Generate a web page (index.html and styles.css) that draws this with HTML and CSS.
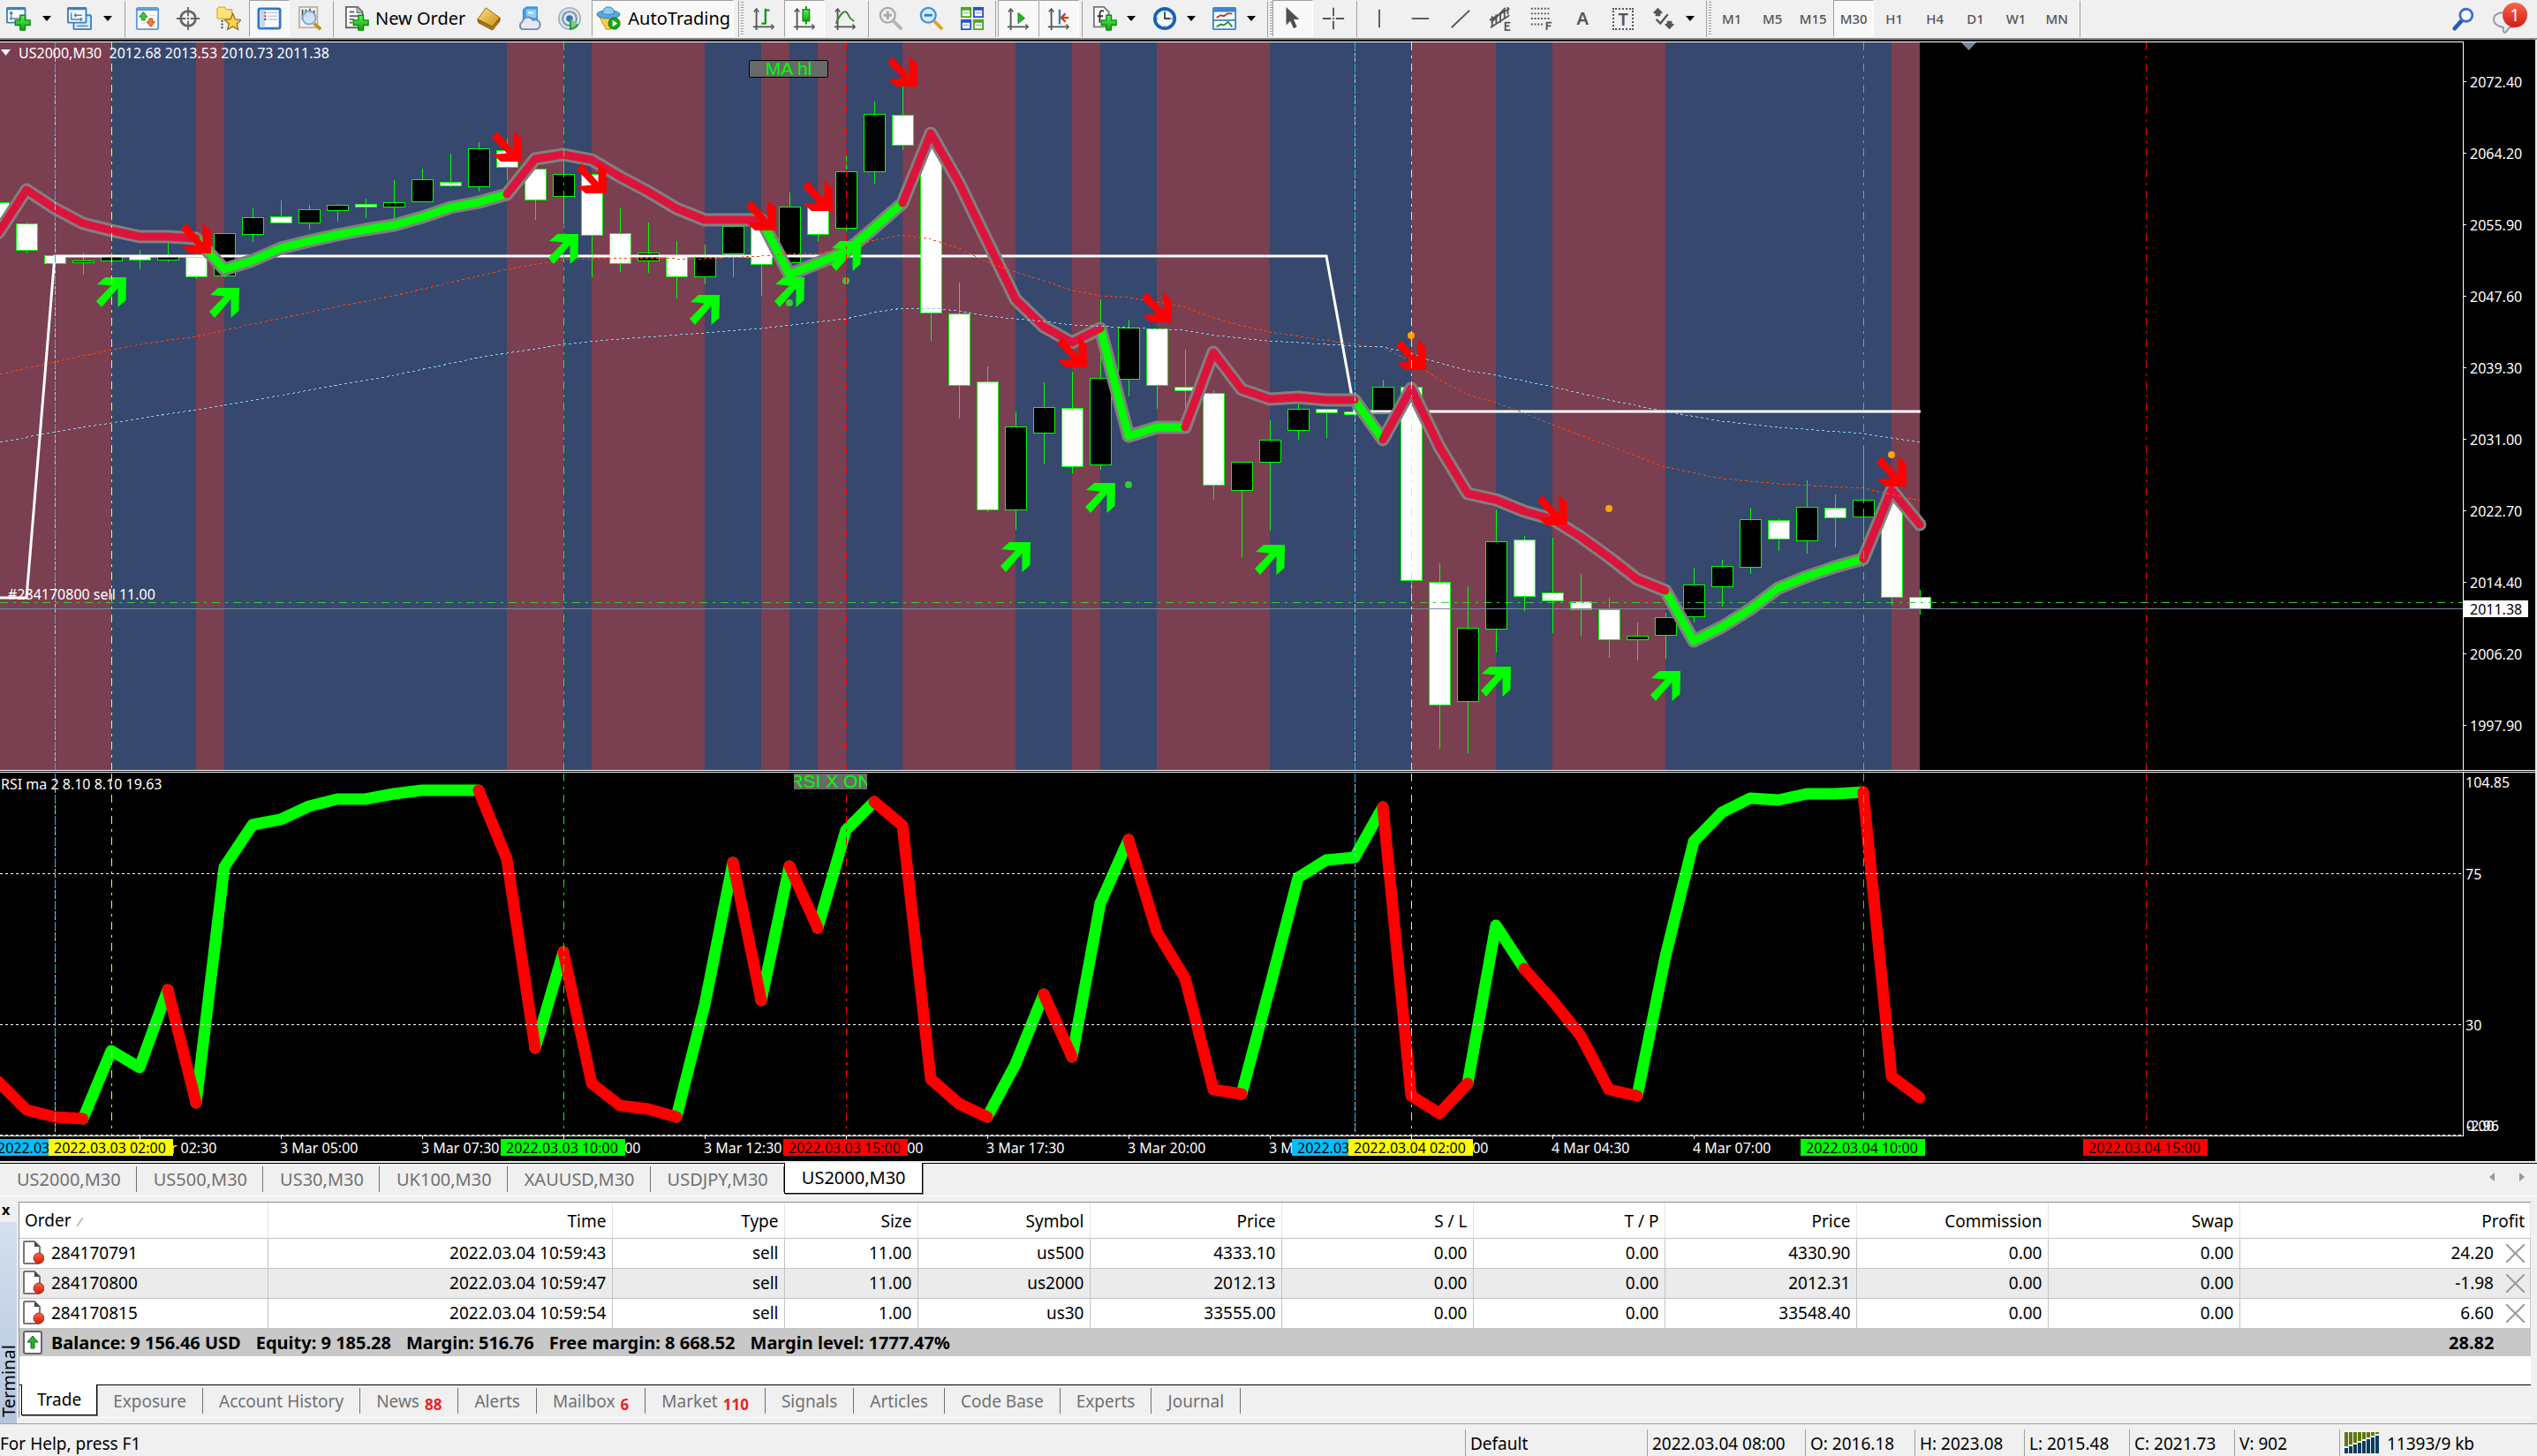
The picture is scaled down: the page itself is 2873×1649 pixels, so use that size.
FILE: index.html
```html
<!DOCTYPE html>
<html lang="en">
<head>
<meta charset="utf-8">
<title>US2000,M30</title>
<link rel="stylesheet" href="styles.css">
</head>
<body>
<svg class="defs" aria-hidden="true">
  <defs>
    <linearGradient id="gGreen" x1="0" y1="0" x2="0" y2="1"><stop offset="0" stop-color="#5df05d"/><stop offset="1" stop-color="#0aa80a"/></linearGradient>
    <linearGradient id="gGold" x1="0" y1="0" x2="1" y2="1"><stop offset="0" stop-color="#ffe08a"/><stop offset="1" stop-color="#c98a10"/></linearGradient>
    <linearGradient id="gRed" x1="0" y1="0" x2="0" y2="1"><stop offset="0" stop-color="#f4664a"/><stop offset="1" stop-color="#d31d10"/></linearGradient>
    <g id="plus"><path d="M17 11h6v6h6v6h-6v6h-6v-6h-6v-6h6z" fill="url(#gGreen)" stroke="#0b8a0b" stroke-width="1.5"/></g>
    <g id="axes" fill="none" stroke="#555" stroke-width="2"><path d="M6 4v25M2 25h25"/><path d="M3 7l3-4 3 4M24 22l3 3-3 3" stroke-width="1.5"/></g>
    <symbol id="docOrder" viewBox="0 0 24 28"><path d="M2 1h11l6 6v17a2 2 0 0 1-2 2H2a1 1 0 0 1-1-1V2z" fill="#fff" stroke="#777" stroke-width="2"/><path d="M13 1v6h6z" fill="#444"/><circle cx="18" cy="20" r="6" fill="url(#gRed)" stroke="#b02a10"/></symbol>
    <symbol id="cross" viewBox="0 0 21 21"><path d="M0 0L21 21M21 0L0 21" stroke="#9a9a9a" stroke-width="2"/></symbol>
  </defs>
</svg>

<header class="toolbar">
  <button class="tool menu" aria-label="New chart"><svg class="icon" viewBox="0 0 30 30"><rect x="1" y="2" width="22" height="18" rx="1" fill="#fff" stroke="#3b7fc0" stroke-width="2"/><path d="M1 3h22" stroke="#3b7fc0" stroke-width="3"/><path d="M6 7v10M4 9l2-2 2 2M4 15h14M16 13l2 2-2 2" fill="none" stroke="#5c7fa5" stroke-width="1.5"/><use href="#plus"/></svg><i class="caret"></i></button>
  <button class="tool menu" aria-label="Profiles"><svg class="icon" viewBox="0 0 30 30"><rect x="8" y="11" width="21" height="17" rx="1" fill="#d8ebfb" stroke="#3b7fc0" stroke-width="2"/><rect x="1" y="2" width="22" height="18" rx="1" fill="#f4faff" stroke="#3b7fc0" stroke-width="2"/><path d="M1 3h22" stroke="#3b7fc0" stroke-width="3"/><path d="M5 8v9M5 16h13M16 14l2 2-2 2M9 11h9M11 9l-2 2 2 2" fill="none" stroke="#5c7fa5" stroke-width="1.5"/><path d="M12 24h13" stroke="#5c7fa5" stroke-width="1.5"/></svg><i class="caret"></i></button>
  <span class="sep"></span>
  <button class="tool" aria-label="Market Watch"><svg class="icon" viewBox="0 0 30 30"><rect x="2" y="2" width="26" height="26" rx="2" fill="#fff" stroke="#5a9bd8" stroke-width="2"/><path d="M2 4h26" stroke="#5a9bd8" stroke-width="3"/><path d="M8 11h5M18 11h7M8 21h5M18 24h7" stroke="#ccc"/><path d="M10 7l5 6h-3v4h-4v-4H5z" fill="#3fc83f" stroke="#17801a"/><path d="M19 25l-5-6h3v-4h4v4h3z" fill="#ff7a3d" stroke="#c03a10"/></svg></button>
  <button class="tool" aria-label="Data Window"><svg class="icon" viewBox="0 0 30 30" fill="none" stroke="#666"><circle cx="15" cy="15" r="9" stroke-width="3"/><path d="M15 1v11M15 18v11M1 15h11M18 15h11" stroke-width="2"/><circle cx="15" cy="15" r="1" fill="#666"/></svg></button>
  <button class="tool" aria-label="Navigator"><svg class="icon" viewBox="0 0 30 30"><path d="M1 3l2-2h7l2 3h7v11H1z" fill="#ffe477" stroke="#c99a1a"/><path d="M7 17v12" stroke="#333" stroke-width="2" stroke-dasharray="2 2"/><path d="M20 9l3 7 7 .6-5.300 4.800L26.500 28.500 20 24.700 13.500 28.500 15.300 21.400 10 16.600l7-.6z" fill="#ffd34d" stroke="#8f6a18" stroke-width="1.300"/></svg></button>
  <button class="tool pressed" aria-label="Terminal"><svg class="icon" viewBox="0 0 30 30"><rect x="2" y="3" width="26" height="24" rx="2" fill="#fff" stroke="#2f78c4" stroke-width="3"/><path d="M7 4v22" stroke="#bcd8f2" stroke-width="5"/><path d="M13 8h12M13 12h12M13 16h12" stroke="#c4c4e4" stroke-width="1.500"/><path d="M9 8h2M9 12h2" stroke="#e02020" stroke-width="2"/><path d="M9 16h2" stroke="#222" stroke-width="2"/></svg></button>
  <button class="tool" aria-label="Strategy Tester"><svg class="icon" viewBox="0 0 30 30"><rect x="2" y="1" width="22" height="25" fill="#f3f1ec" stroke="#b9b4aa" stroke-width="2"/><path d="M6 4v12M10 4v9M15 3v7M20 5v8" stroke="#555" stroke-width="2"/><circle cx="14" cy="14" r="8" fill="#c7e2fa" fill-opacity=".85" stroke="#79a7d6" stroke-width="2"/><path d="M20 21l8 7" stroke="#c78f1c" stroke-width="4"/></svg></button>
  <span class="sep"></span>
  <button class="tool labelled"><svg class="icon" viewBox="0 0 30 30"><path d="M2 1h14l6 6v19H2z" fill="#fff" stroke="#666" stroke-width="2"/><path d="M15 1v7h7" fill="#bbb" stroke="#666"/><path d="M6 7h6M6 12h12M6 16h6M6 20h4" stroke="#666" stroke-width="2"/><use href="#plus"/></svg>New Order</button>
  <button class="tool" aria-label="MetaEditor"><svg class="icon" viewBox="0 0 30 30"><path d="M12 2l17 12-9 12L2 16z" fill="url(#gGold)" stroke="#9a6407"/><path d="M2 16l1 4 17 9 9-11v-4l-9 11z" fill="#b5760c" stroke="#7a4d05"/></svg></button>
  <button class="tool" aria-label="Hosting"><svg class="icon" viewBox="0 0 30 30"><path d="M8 4l4-3h13v16H8z" fill="#3ea4f5" stroke="#1e7fd0"/><path d="M12 4h12v10H12z" fill="#8fd0ff"/><path d="M14 8h6" stroke="#fff" stroke-width="2"/><path d="M7 28a5 5 0 0 1 0-9 7 7 0 0 1 13-2 6 6 0 0 1 5 11z" fill="#e3e9f5" stroke="#7186b3" stroke-width="2"/></svg></button>
  <button class="tool" aria-label="Signals"><svg class="icon" viewBox="0 0 30 30" fill="none"><circle cx="15" cy="15" r="13" fill="#dfe7ea" stroke="#a7b4bb" stroke-width="2"/><circle cx="15" cy="15" r="8.500" stroke="#7c9db5" stroke-width="2.500"/><circle cx="15" cy="15" r="4" fill="#2f6fc4"/><path d="M16 15v13q6-1 9-6" fill="#7fc98a" stroke="#1e9c2c" stroke-width="2"/></svg></button>
  <button class="tool labelled pressed auto"><svg class="icon" viewBox="0 0 30 30"><path d="M4 13h22l-8 15h-6z" fill="#f7cf4a" stroke="#c18f12"/><ellipse cx="15" cy="10" rx="14" ry="5" fill="#5aa9dc" stroke="#2b7db5"/><path d="M8 9q0-8 7-8t7 8q-7 3-14 0z" fill="#8ccbf0" stroke="#2b7db5"/><circle cx="22" cy="21" r="7" fill="#18a818" stroke="#0c700c"/><path d="M20 17l6 4-6 4z" fill="#fff"/></svg>AutoTrading</button>
  <span class="sep"></span><span class="grip"></span>
  <button class="tool" aria-label="Bar chart"><svg class="icon" viewBox="0 0 30 30"><use href="#axes"/><path d="M17 3v19M12 21h5M17 5h5" stroke="#159a15" stroke-width="2.500" fill="none"/></svg></button>
  <button class="tool pressed" aria-label="Candlesticks"><svg class="icon" viewBox="0 0 30 30"><use href="#axes"/><path d="M17 0v22" stroke="#118811" stroke-width="2"/><rect x="13" y="4" width="8" height="14" fill="url(#gGreen)" stroke="#118811" stroke-width="1.500"/></svg></button>
  <button class="tool" aria-label="Line chart"><svg class="icon" viewBox="0 0 30 30"><use href="#axes"/><path d="M4 21C9 9 15 3 18 9s4 7 8 9" stroke="#2c8a2c" stroke-width="2" fill="none"/></svg></button>
  <span class="sep"></span>
  <button class="tool" aria-label="Zoom in" disabled><svg class="icon" viewBox="0 0 30 30"><circle cx="11" cy="11" r="9" fill="#eee" stroke="#aaa" stroke-width="2.500"/><path d="M11 6v10M6 11h10" stroke="#aaa" stroke-width="3"/><path d="M18 18l10 10" stroke="#b5b5b5" stroke-width="4"/></svg></button>
  <button class="tool" aria-label="Zoom out"><svg class="icon" viewBox="0 0 30 30"><circle cx="11" cy="11" r="9" fill="#d4ecfd" stroke="#4a93cf" stroke-width="2.500"/><path d="M6 11h10" stroke="#2f7fc0" stroke-width="3"/><path d="M18 18l10 10" stroke="#d9a51f" stroke-width="4"/></svg></button>
  <button class="tool" aria-label="Tile windows"><svg class="icon" viewBox="0 0 30 30"><path d="M1 1h13v13H1z" fill="#49a81e"/><path d="M16 1h13v13H16z" fill="#2a52c8"/><path d="M1 16h13v13H1z" fill="#2a52c8"/><path d="M16 16h13v13H16z" fill="#49a81e"/><path d="M3 5h9v7H3zM18 5h9v7h-9zM3 20h9v7H3zM18 20h9v7h-9z" fill="#fff"/><path d="M4 8h7M19 8h7M4 23h7M19 23h7" stroke="#9db4d8" stroke-width="1.500"/></svg></button>
  <span class="sep"></span>
  <button class="tool pressed" aria-label="Auto scroll"><svg class="icon" viewBox="0 0 30 30"><use href="#axes"/><path d="M15 8v13l8-6.500z" fill="#1fb81f" stroke="#118811"/></svg></button>
  <button class="tool pressed" aria-label="Chart shift"><svg class="icon" viewBox="0 0 30 30"><use href="#axes"/><path d="M16 4v18" stroke="#2f7fc0" stroke-width="2.500"/><path d="M27 14h-7M23 9l-5 5 5 5" stroke="#c8401a" stroke-width="2.500" fill="none"/></svg></button>
  <span class="sep"></span>
  <button class="tool menu pick" aria-label="Indicators"><svg class="icon" viewBox="0 0 30 30"><path d="M2 1h12l6 6v18H2z" fill="#fff" stroke="#777" stroke-width="2"/><path d="M14 6q-5-2-5 4v10M6 12h7" stroke="#333" stroke-width="2" fill="none"/><use href="#plus"/></svg><i class="caret"></i></button>
  <button class="tool menu pick" aria-label="Periods"><svg class="icon" viewBox="0 0 30 30"><circle cx="15" cy="15" r="12" fill="#f5f9fd" stroke="#1663b8" stroke-width="4"/><path d="M15 7v8h7" stroke="#345" stroke-width="2" fill="none"/><g fill="#89a"><circle cx="15" cy="6" r="1"/><circle cx="6" cy="15" r="1"/><circle cx="15" cy="24" r="1"/><circle cx="24" cy="15" r="1"/></g></svg><i class="caret"></i></button>
  <button class="tool menu pick" aria-label="Templates"><svg class="icon" viewBox="0 0 30 30"><rect x="1" y="2" width="27" height="26" rx="1" fill="#fff" stroke="#3d86cc" stroke-width="2"/><path d="M1 4.500h27" stroke="#3d86cc" stroke-width="5"/><path d="M1 17h27" stroke="#3d86cc" stroke-width="2"/><path d="M5 14l5-3 4 1 4-3 6 0" stroke="#a63c1c" stroke-width="2" fill="none"/><path d="M5 25l5-3 4 1 5-4 5 6" stroke="#2c8a2c" stroke-width="2" fill="none"/></svg><i class="caret"></i></button>
  <span class="sep"></span><span class="grip"></span>
  <button class="tool pressed" aria-label="Cursor"><svg class="icon" viewBox="0 0 30 30"><path d="M7 1v22l5-5 4 9 4-2-4-9h7z" fill="#4f4f4f"/></svg></button>
  <button class="tool" aria-label="Crosshair"><svg class="icon" viewBox="0 0 30 30"><path d="M15 2v10M15 18v10M2 15h10M18 15h10M15 14v2" stroke="#555" stroke-width="2"/></svg></button>
  <span class="sep"></span>
  <button class="tool" aria-label="Vertical line"><svg class="icon" viewBox="0 0 30 30"><path d="M15 4v22" stroke="#555" stroke-width="2"/></svg></button>
  <button class="tool" aria-label="Horizontal line"><svg class="icon" viewBox="0 0 30 30"><path d="M5 15h21" stroke="#555" stroke-width="2"/></svg></button>
  <button class="tool" aria-label="Trendline"><svg class="icon" viewBox="0 0 30 30"><path d="M4 26L26 5" stroke="#555" stroke-width="2"/></svg></button>
  <button class="tool" aria-label="Equidistant channel"><svg class="icon" viewBox="0 0 30 30"><path d="M1 17L25 3M2 26L25 11M4 12v13M9 10v11M14 8v12M19 4v10M23 1v9M3 20L20 2" stroke="#555" stroke-width="2"/><path d="M26 20h-6v9h6M20 24h5" stroke="#555" stroke-width="2" fill="none"/></svg></button>
  <button class="tool" aria-label="Fibonacci retracement"><svg class="icon" viewBox="0 0 30 30"><path d="M2 3h24M2 9h24M2 15h24M2 22h15" stroke="#555" stroke-width="2" stroke-dasharray="2 2"/><path d="M27 20h-6v9M21 24h5" stroke="#555" stroke-width="2" fill="none"/></svg></button>
  <button class="tool glyph">A</button>
  <button class="tool glyph"><span class="dotted">T</span></button>
  <button class="tool menu pick" aria-label="Arrows"><svg class="icon" viewBox="0 0 30 30"><path d="M8 2l6 6-3 1v3H5V9L2 8zM22 28l-6-6 3-1v-3h6v3l3 1z" fill="#555"/><path d="M6 16l5 5 9-11" stroke="#555" stroke-width="2.500" fill="none"/></svg><i class="caret"></i></button>
  <span class="sep"></span><span class="grip"></span>
  <button class="tool period">M1</button>
  <button class="tool period">M5</button>
  <button class="tool period">M15</button>
  <button class="tool period pressed">M30</button>
  <button class="tool period">H1</button>
  <button class="tool period">H4</button>
  <button class="tool period">D1</button>
  <button class="tool period">W1</button>
  <button class="tool period">MN</button>
  <span class="sep"></span>
  <span class="spacer"></span>
  <button class="tool" aria-label="Search"><svg class="icon" viewBox="0 0 30 30"><path d="M4 27l10-11" stroke="#2b57b8" stroke-width="5" stroke-linecap="round"/><circle cx="18" cy="11" r="7.500" fill="#f3f7ff" stroke="#3f6fc9" stroke-width="3"/></svg></button>
  <button class="tool notify" aria-label="1 notification"><svg class="bubble" viewBox="0 0 40 40"><path d="M14 36q-3 0-2-6Q1 28 1 21q0-8 14-8t14 8q0 9-10 9z" fill="#eceef4" stroke="#9a9aa4" stroke-width="2"/><circle cx="25" cy="16" r="14" fill="url(#gRed)"/></svg><span class="count">1</span></button>
</header>

<main class="chart">
  <svg id="plot" class="plot" role="img" aria-label="US2000 M30 price chart with RSI"></svg>
  <button class="chart-button ma">MA hl</button>
  <button class="chart-button rsi">RSI X ON</button>
</main>

<nav class="chart-tabs">
  <button>US2000,M30</button><button>US500,M30</button><button>US30,M30</button><button>UK100,M30</button><button>XAUUSD,M30</button><button>USDJPY,M30</button><button class="active">US2000,M30</button>
  <span class="spacer"></span>
  <button class="scroll" aria-label="Scroll left"><i class="left"></i></button>
  <button class="scroll" aria-label="Scroll right"><i class="right"></i></button>
</nav>

<section class="terminal">
  <aside class="side"><button class="close" aria-label="Close terminal">x</button><div class="side-title">Terminal</div></aside>
  <div class="terminal-body">
    <table>
      <colgroup><col class="c-order"><col class="c-time"><col class="c-type"><col class="c-size"><col class="c-symbol"><col class="c-num"><col class="c-num"><col class="c-num"><col class="c-num"><col class="c-num"><col class="c-num"><col></colgroup>
      <thead><tr><th>Order <span class="sort">⁄</span></th><th>Time</th><th>Type</th><th>Size</th><th>Symbol</th><th>Price</th><th>S / L</th><th>T / P</th><th>Price</th><th>Commission</th><th>Swap</th><th>Profit</th></tr></thead>
      <tbody>
        <tr><td><span class="order"><svg class="doc"><use href="#docOrder"/></svg>284170791</span></td><td>2022.03.04 10:59:43</td><td>sell</td><td>11.00</td><td>us500</td><td>4333.10</td><td>0.00</td><td>0.00</td><td>4330.90</td><td>0.00</td><td>0.00</td><td><span class="profit">24.20<button aria-label="Close order 284170791"><svg><use href="#cross"/></svg></button></span></td></tr>
        <tr class="alt"><td><span class="order"><svg class="doc"><use href="#docOrder"/></svg>284170800</span></td><td>2022.03.04 10:59:47</td><td>sell</td><td>11.00</td><td>us2000</td><td>2012.13</td><td>0.00</td><td>0.00</td><td>2012.31</td><td>0.00</td><td>0.00</td><td><span class="profit">-1.98<button aria-label="Close order 284170800"><svg><use href="#cross"/></svg></button></span></td></tr>
        <tr><td><span class="order"><svg class="doc"><use href="#docOrder"/></svg>284170815</span></td><td>2022.03.04 10:59:54</td><td>sell</td><td>1.00</td><td>us30</td><td>33555.00</td><td>0.00</td><td>0.00</td><td>33548.40</td><td>0.00</td><td>0.00</td><td><span class="profit">6.60<button aria-label="Close order 284170815"><svg><use href="#cross"/></svg></button></span></td></tr>
      </tbody>
      <tfoot><tr><td colspan="11"><div class="order"><svg class="doc" viewBox="0 0 24 28"><rect x="1" y="1" width="20" height="25" rx="2" fill="#fff" stroke="#666" stroke-width="2"/><path d="M11 6l6 7h-4v7H9v-7H5z" fill="#2fae2f" stroke="#0d6f0d"/></svg><div class="figures"><span>Balance: 9 156.46 USD</span><span>Equity: 9 185.28</span><span>Margin: 516.76</span><span>Free margin: 8 668.52</span><span>Margin level: 1777.47%</span></div></div></td><td class="total">28.82</td></tr></tfoot>
    </table>
    <nav class="terminal-tabs">
      <button class="active">Trade</button><button>Exposure</button><button>Account History</button><button>News<b>88</b></button><button>Alerts</button><button>Mailbox<b>6</b></button><button>Market<b>110</b></button><button>Signals</button><button>Articles</button><button>Code Base</button><button>Experts</button><button>Journal</button>
    </nav>
  </div>
</section>

<footer class="status">
  <span class="help">For Help, press F1</span>
  <span class="profile">Default</span>
  <span class="when">2022.03.04 08:00</span>
  <span class="wide">O: 2016.18</span><span class="wide">H: 2023.08</span><span>L: 2015.48</span><span>C: 2021.73</span><span>V: 902</span>
  <span class="net"><svg id="bars" width="40" height="24"></svg>11393/9 kb</span>
</footer>
<script src="chart.js"></script>
</body>
</html>
```
FILE: styles.css
```css
* { box-sizing: border-box; }
body { margin: 0; min-height: 100vh; display: flex; flex-direction: column; background: #f0f0f0; color: #000; font: 19px/26px "Noto Sans", "Open Sans", sans-serif; overflow-x: hidden; }
button { font: inherit; color: inherit; background: none; border: 0; padding: 0; margin: 0; }
.defs { position: absolute; width: 0; height: 0; }
.spacer { flex: 1; }

.toolbar { display: flex; align-items: flex-start; height: 45px; border-bottom: 2px solid #8c8c8c; white-space: nowrap; }
.tool { flex: none; width: 46px; height: 42px; display: flex; align-items: center; justify-content: center; }
.tool.pressed { border-left: 1px solid #a0a0a0; border-top: 1px solid #a0a0a0; background: #f8f8f8; border-right: 1px solid #fff; border-bottom: 1px solid #fff; }
.icon { width: 28px; height: 28px; flex: none; }
.menu { width: 69px; justify-content: flex-start; gap: 13px; padding-left: 7px; }
.menu.pick { width: 68px; padding-left: 9px; gap: 11px; }
.caret { border: 5px solid transparent; border-top: 6px solid #000; border-bottom: 0; }
.labelled { width: auto; gap: 7px; padding: 0 3px 0 10px; font-size: 20px; }
.labelled.auto { gap: 8px; padding: 0 3px 0 4px; margin: 0 2px; }
.sep { width: 1px; height: 41px; margin: 1px 2px 0 3px; background: #a0a0a0; flex: none; }
.grip { width: 3px; height: 38px; margin-top: 2px; background: repeating-linear-gradient(#999 0 1px, #f0f0f0 1px 3px); flex: none; }
.glyph { color: #555; font: 600 20px/24px "Noto Sans", sans-serif; }
.dotted { width: 24px; height: 25px; border: 2px dotted #555; display: block; line-height: 21px; }
.period { color: #555; font: 500 15px/20px "Noto Sans", sans-serif; }
.notify { position: relative; width: 44px; margin: 0 8px 0 8px; }
.bubble { width: 40px; height: 40px; }
.count { position: absolute; left: 18px; top: 4px; width: 18px; text-align: center; color: #fff; font-size: 20px; line-height: 26px; }

.chart { position: relative; height: 1270px; flex: none; background: #000; border-right: 2px solid #e8e8e8; overflow: hidden; }
.plot { display: block; width: 100%; height: 100%; font: 16px "Noto Sans", sans-serif; fill: #fff; }
.chart-button { position: absolute; display: flex; align-items: center; justify-content: center; overflow: hidden; white-space: nowrap; background: #696969; color: #0f0; font: 21px/20px "Liberation Sans", Arial, sans-serif; }
.ma { left: 848px; top: 23px; width: 90px; height: 20px; border: 1px solid #000; border-radius: 2px; }
.rsi { left: 899px; top: 831px; width: 83px; height: 18px; }

.chart-tabs { display: flex; height: 38px; margin-top: 2px; border-top: 1px solid #000; border-bottom: 1px solid #fff; color: #707070; font-size: 20px; }
.chart-tabs button { padding: 0 18px 0 19px; position: relative; }
.chart-tabs button::after { content: ""; position: absolute; right: 0; top: 3px; height: 29px; border-right: 1px solid #707070; }
.chart-tabs .active { background: #fff; color: #000; border: 1px solid #000; border-top: 0; box-shadow: 1px 1px 0 #888; margin-top: -1px; height: 35px; }
.chart-tabs .active::after, .chart-tabs .scroll::after { content: none; }
.chart-tabs .scroll { padding: 0 14px; height: 30px; }
.left, .right { display: block; border: 5px solid transparent; }
.left { border-right: 6px solid #999; border-left: 0; }
.right { border-left: 6px solid #999; border-right: 0; }

.terminal { display: flex; flex: 1; margin-top: 6px; }
.side { width: 21px; display: flex; flex-direction: column; padding-right: 2px; }
.close { height: 23px; width: 13px; font: bold 16px/14px "Noto Sans", sans-serif; padding-bottom: 6px; }
.side-title { flex: 1; background: linear-gradient(#b6c5dc, #d3e0ef); writing-mode: vertical-rl; transform: rotate(180deg); font-size: 20px; line-height: 19px; padding-top: 7px; }
.terminal-body { flex: 1; display: flex; flex-direction: column; border-left: 1px solid #909090; border-top: 1px solid #909090; border-bottom: 1px solid #fff; margin-right: 7px; min-width: 0; height: 245px; }
table { width: 100%; table-layout: fixed; border-collapse: collapse; background: #fff; }
.c-order { width: 281px; } .c-time { width: 390px; } .c-type { width: 195px; } .c-size { width: 151px; } .c-symbol { width: 195px; } .c-num { width: 217px; }
th, td { padding: 0 6px; text-align: right; font-weight: normal; white-space: nowrap; height: 34px; border: 1px solid #c4c4c4; border-width: 0 1px 1px 0; }
th { height: 40px; padding-top: 2px; border-right-color: #e4e4e4; }
th:first-child, td:first-child { text-align: left; }
td:first-child { padding-left: 4px; }
.sort { color: #888; font-size: 14px; margin-left: 4px; }
.alt { background: #ebebeb; }
.order { display: flex; align-items: center; gap: 8px; }
.figures { display: flex; gap: 17px; }
.doc { width: 24px; height: 28px; }
.profit { display: flex; align-items: center; justify-content: flex-end; gap: 14px; }
.profit button, .profit svg { display: block; width: 21px; height: 21px; }
tfoot td { background: #c8c8c8; border: 0; font-weight: bold; font-size: 20px; }
tfoot .total { padding-right: 41px; }
.terminal-tabs { display: flex; height: 37px; margin-top: auto; border-top: 1px solid #000; color: #707070; background: #f0f0f0; box-shadow: 0 -32px 0 #fff; padding-left: 2px; }
.terminal-tabs button { position: relative; padding: 0 19px 0 18px; display: flex; gap: 6px; align-items: center; }
.terminal-tabs button::after { content: ""; position: absolute; right: 0; top: 3px; height: 29px; border-right: 1px solid #707070; }
.terminal-tabs .active { padding: 0 17px; background: #fff; color: #000; border: 1px solid #000; border-top: 0; height: 35px; margin-top: -1px; box-shadow: 1px 1px 0 #888; }
.terminal-tabs .active::after { content: none; }
.terminal-tabs b { color: #f02020; font-size: 17px; padding-top: 8px; }

.status { display: flex; height: 37px; border-top: 1px solid #a0a0a0; align-items: flex-end; }
.status span { width: 119px; height: 30px; border-left: 1px solid #a0a0a0; padding: 4px 0 0 5px; line-height: 24px; white-space: nowrap; }
.status .help { flex: 1; border: 0; padding-left: 0; }
.status .wide { width: 124px; }
.status .profile { width: 206px; } .status .when { width: 179px; }
.status .net { width: 224px; display: flex; gap: 8px; padding-top: 3px; line-height: 26px; }
```
FILE: chart.js
```js
const NS = 'http://www.w3.org/2000/svg';
const plot = document.getElementById('plot');
const TOP = 45;
const FIRST = 30, STEP = 32;
const xOf = k => FIRST + STEP * k;

function add(parent, tag, attrs, text) {
  const el = document.createElementNS(NS, tag);
  for (const name in attrs) el.setAttribute(name, attrs[name]);
  if (text !== undefined) el.textContent = text;
  parent.appendChild(el);
  return el;
}
const root = add(plot, 'g', { transform: `translate(0,-${TOP})` });
const rect = (x, y, w, h, fill, more) => add(root, 'rect', Object.assign({ x, y, width: w, height: h, fill }, more));
const line = (x1, y1, x2, y2, stroke, more) => add(root, 'line', Object.assign({ x1, y1, x2, y2, stroke, 'shape-rendering': 'crispEdges' }, more));
const text = (x, y, s, fill, more) => add(root, 'text', Object.assign({ x, y, fill, style: 'white-space:pre' }, more), s);

/* trend background */
const edges = [0, 126, 222, 254, 574, 638, 670, 798, 862, 894, 926, 958, 1022, 1150, 1214, 1246, 1310, 1438, 1598, 1694, 1758, 1886, 2142, 2174];
for (let i = 0; i < edges.length - 1; i++) rect(edges[i], 48, edges[i + 1] - edges[i], 824, i % 2 ? '#36486e' : '#7a3f51');

/* candles: high, body top, body bottom, low, w = white (down) / b = black (up) */
const candles = `229 229 254 254 w|252 253 283 286 w|289 289 298 298 w|286 295 297 310 b|286 290 295 300 b|283 289 294 304 w|275 290 294 296 b|287 291 313 315 w|264 264 312 313 b|236 246 265 273 b|227 245 252 252 w|232 237 252 259 b|231 232 238 250 b|225 231 234 246 w|204 229 234 248 b|191 203 228 228 b|174 206 210 211 w|161 168 211 216 b|157 170 189 204 w|191 191 226 248 w|182 197 222 253 b|197 197 266 313 w|236 264 298 307 w|252 286 295 308 b|273 290 313 337 w|277 290 313 321 b|256 256 287 313 b|252 252 299 334 w|218 234 297 297 b|232 232 265 272 w|175 194 258 261 b|115 129 194 207 b|97 130 164 169 w|161 161 354 385 w|320 355 436 473 w|415 432 577 579 w|466 483 577 599 b|433 461 490 525 b|421 462 528 535 w|339 428 526 531 b|362 371 429 448 b|372 372 436 462 w|396 438 442 464 w|442 445 549 565 w|523 523 555 630 b|476 498 523 600 b|442 463 487 497 b|463 463 467 495 w|464 466 469 469 w|430 438 468 468 b|434 438 657 672 w|638 659 798 847 w|664 711 794 852 b|577 613 712 738 b|607 611 675 691 w|609 671 680 716 w|650 681 690 720 w|677 690 724 744 w|705 720 724 747 b|694 699 719 745 b|643 662 698 704 b|634 641 664 686 b|575 588 642 649 b|588 589 610 623 w|544 574 612 626 b|560 575 586 619 w|504 566 585 612 b|566 566 676 684 w|668 676 689 695 w`;

/* step line, price levels and slow averages */
const levelLine = '0,677 30,677 62,290 1502,290 1534,466 2175,466';
candles.split('|').forEach((row, i) => {
  const [h, t, b, l, type] = row.split(' ');
  const x = xOf(i - 1);
  line(x + .5, +h, x + .5, +l + 1, '#00ff00');
  rect(x - 11.5, +t + .5, 24, b - t, type === 'w' ? '#fff' : '#000', { stroke: '#00ff00' });
});
line(0, 682.5, 2789, 682.5, '#32cd32', { 'stroke-dasharray': '9 6 3 6' });
line(0, 689.5, 2789, 689.5, '#778899');
add(root, 'polyline', { points: levelLine, fill: 'none', stroke: '#fff', 'stroke-width': 3 });

function dotted(points, stroke) {
  add(root, 'polyline', { points, fill: 'none', stroke, 'stroke-dasharray': '3 3', 'shape-rendering': 'crispEdges' });
}
const orange = '0,424 30,417 62,410 126,396 165,389 222,381 254,374 315,361 378,348 446,335 510,320 574,305 638,294 702,292 734,292 766,293 798,293 862,290 894,288 926,287 958,282 990,272 1022,266 1054,271 1086,281 1118,297 1150,308 1182,318 1214,329 1246,335 1278,337 1310,342 1342,348 1374,360 1406,369 1438,376 1470,381 1534,390 1566,394 1598,409 1630,430 1662,447 1694,456 1726,468 1758,481 1822,505 1886,529 1950,542 2014,548 2110,553 2142,560 2174,567';
const sky = '0,501 62,489 126,479 222,464 254,459 350,442 446,425 542,405 574,400 638,390 688,385 798,377 862,372 958,361 990,354 1022,349 1054,349 1086,352 1118,358 1150,361 1182,364 1214,368 1278,371 1342,374 1378,380 1434,386 1470,388 1534,392 1566,393 1598,400 1619,408 1663,420 1694,425 1758,438 1822,453 1886,466 1950,477 2014,484 2110,491 2142,496 2174,501';

/* coloured segment lines */
function segments(values, greens, up, down, width, halo) {
  const pts = values.map((y, i) => `${xOf(i - 1)},${y}`);
  const base = { fill: 'none', 'stroke-linejoin': 'round', 'stroke-linecap': 'round' };
  if (halo) add(root, 'polyline', { ...base, points: pts.join(' '), stroke: '#808080', 'stroke-width': width + 6 });
  const isGreen = k => greens.some(([a, b]) => k >= a && k < b);
  for (const pass of [true, false]) {
    let run = [];
    for (let i = 0; i < pts.length; i++) {
      const on = i < pts.length - 1 && isGreen(i - 1) === pass;
      if (on) { if (!run.length) run.push(pts[i]); run.push(pts[i + 1]); }
      else if (run.length) { add(root, 'polyline', { ...base, points: run.join(' '), stroke: pass ? up : down, 'stroke-width': width }); run = []; }
    }
  }
}
segments([264, 215, 236, 253, 261, 268, 268, 270, 305, 295, 281, 273, 266, 260, 255, 246, 235, 229, 220, 180, 175, 181, 200, 217, 236, 249, 249, 249, 311, 298, 285, 258, 230, 151, 207, 273, 339, 370, 388, 372, 494, 484, 484, 399, 441, 452, 450, 453, 453, 498, 440, 506, 559, 566, 579, 588, 608, 631, 656, 669, 726, 710, 690, 666, 653, 642, 633, 555, 594],
  [[6, 17], [26, 31], [38, 41], [47, 48], [58, 65]], '#00ff00', '#dc143c', 9, true);
dotted(orange, '#ff4500');
dotted(sky, '#87ceeb');

/* signal arrows */
const DOWN = 'M0 7L6 0L24.500 21.500V0L33.500 8L34 34H10L1 26L17 24.500Z';
const UP = 'M0 27L6 34L24.500 12.500V34L33.500 26L34 0H10L1 8L17 9.500Z';
[[6, 253], [17, 149], [20, 185], [26, 227], [28, 205], [31, 64], [37, 382], [40, 331], [49, 385], [54, 561], [66, 517]].forEach(([k, y]) => add(root, 'path', { d: DOWN, fill: '#ff0000', transform: `translate(${xOf(k) - 17},${y})` }));
[[3, 314], [7, 326], [19, 265], [24, 334], [27, 314], [29, 273], [35, 614], [38, 547], [44, 617], [52, 755], [58, 760]].forEach(([k, y]) => add(root, 'path', { d: UP, fill: '#00ff00', transform: `translate(${xOf(k) - 17},${y})` }));
[[958, 318], [894, 343], [1278, 549]].forEach(([cx, cy]) => add(root, 'circle', { cx, cy, r: 4, fill: '#32cd32' }));
[[1598, 380], [1822, 576], [2142, 515]].forEach(([cx, cy]) => add(root, 'circle', { cx, cy, r: 4, fill: '#ffa500' }));

/* RSI pane */
segments([1225, 1257, 1265, 1267, 1190, 1209, 1121, 1249, 982, 934, 928, 913, 905, 905, 899, 895, 895, 895, 973, 1187, 1078, 1227, 1252, 1256, 1265, 1138, 977, 1133, 981, 1051, 940, 908, 935, 1222, 1250, 1265, 1205, 1126, 1197, 1023, 951, 1055, 1108, 1234, 1239, 1118, 994, 974, 971, 914, 1241, 1261, 1227, 1048, 1097, 1133, 1173, 1234, 1241, 1083, 953, 920, 904, 906, 899, 899, 897, 1219, 1243],
  [[2, 5], [6, 16], [18, 19], [23, 25], [26, 27], [28, 30], [34, 36], [37, 39], [43, 48], [51, 53], [57, 65]], '#00ff00', '#ff0000', 13, false);

[989.5, 1160.5, 1285.5].forEach(y => line(0, y, 2789, y, '#fff', { 'stroke-dasharray': '3 3' }));

/* session lines */
[[62, '#00bfff'], [126, '#ffff00'], [638, '#00ff00'], [958, '#ff0000'], [1534, '#00bfff'], [1598, '#ffff00'], [2110, '#00ff00'], [2430, '#ff0000']].forEach(([x, c]) => {
  [[48, 872], [876, 1285]].forEach(([a, b]) => {
    if (c === '#00bfff') line(x + .5, a, x + .5, b, '#c8c8c8', { 'stroke-dasharray': '4 2' });
    line(x + .5, a, x + .5, b, c, { 'stroke-dasharray': '9 6 3 6' });
  });
});

/* frames */
rect(0, 47, 2790, 1, '#fff');
rect(2789, 47, 1, 1240, '#fff');
rect(0, 872, '100%', 1, '#fff');
rect(0, 873, '100%', 1, '#000');
rect(0, 874, '100%', 1, '#fff');
rect(0, 1286, 2790, 1, '#fff');
add(root, 'path', { d: 'M2221 48h17l-8.500 9z', fill: '#778899' });
add(root, 'path', { d: 'M1 56h11l-5.500 7z', fill: '#fff' });

/* captions and scales */
text(21, 66, 'US2000,M30  2012.68 2013.53 2010.73 2011.38', '#fff');
text(1, 894, 'RSI ma 2 8.10 8.10 19.63', '#fff');
text(9, 679, '#284170800 sell 11.00', '#fff');
['2072.40', '2064.20', '2055.90', '2047.60', '2039.30', '2031.00', '2022.70', '2014.40', '2006.20', '1997.90'].forEach((s, i) => {
  line(2790, 92.5 + 81 * i, 2793, 92.5 + 81 * i, '#fff');
  text(2797, 99 + 81 * i, s, '#fff');
});
rect(2790, 680, 73, 19, '#fff');
text(2797, 696, '2011.38', '#000');
text(2792, 892, '104.85', '#fff');
text(2792, 996, '75', '#fff');
text(2792, 1167, '30', '#fff');
text(2793, 1281, '0.00', '#fff');
text(2793, 1281, '-2.96', '#fff');

['3 Mar 02:30', '3 Mar 05:00', '3 Mar 07:30', '3 Mar 10:00', '3 Mar 12:30', '3 Mar 15:00', '3 Mar 17:30', '3 Mar 20:00', '3 Mar 22:30', '4 Mar 02:00', '4 Mar 04:30', '4 Mar 07:00'].forEach((s, i) => {
  const x = 158 + 160 * i;
  line(x + .5, 1287, x + .5, 1290, '#fff');
  text(x - 1, 1306, s, '#fff');
});
[[-9, '#00bfff', '2022.03.03 00:00'], [55, '#ffff00', '2022.03.03 02:00'], [567, '#00ff00', '2022.03.03 10:00'], [887, '#ff0000', '2022.03.03 15:00'], [1463, '#00bfff', '2022.03.04 00:00'], [1527, '#ffff00', '2022.03.04 02:00'], [2039, '#00ff00', '2022.03.04 10:00'], [2359, '#ff0000', '2022.03.04 15:00']].forEach(([x, c, s]) => {
  rect(x, 1290, 141, 19, c);
  text(x + 6, 1306, s, '#000');
});

/* connection meter */
const bars = document.getElementById('bars');
for (let i = 0; i < 8; i++) {
  const split = 16 - i * 2;
  add(bars, 'rect', { x: i * 5, y: 0, width: 4, height: split, fill: '#5c7a0c' });
  add(bars, 'rect', { x: i * 5, y: split + 2, width: 4, height: 22 - split, fill: '#0b3c5c' });
}
```
